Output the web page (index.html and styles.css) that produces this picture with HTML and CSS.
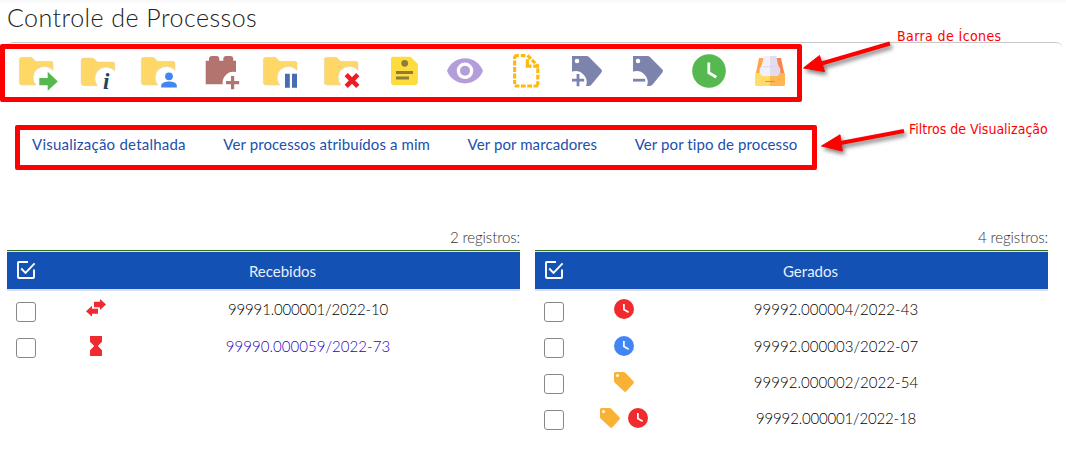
FILE: index.html
```html
<!DOCTYPE html>
<html lang="pt-BR">
<head>
<meta charset="utf-8">
<title>Controle de Processos</title>
<link rel="stylesheet" href="styles.css">
</head>
<body>
<svg class="defs" width="0" height="0" aria-hidden="true">
  <defs>
    <symbol id="folder" viewBox="0 0 40 40"><path d="M4 6.3H12.5Q13.6 6.3 14.4 7.1L17.5 10.3H33Q35 10.3 35 12.3V19.4A11 11 0 0 0 17.8 34H4Q1.3 34 1.3 31.3V9Q1.3 6.3 4 6.3Z" fill="#ffd766" stroke="#d9d3b4" stroke-width=".5"/></symbol>
    <symbol id="tag-cut" viewBox="0 0 40 40"><path fill-rule="evenodd" d="M5 5H19.5Q21 5 22.2 6.2L34.4 18.6Q35.6 20 34.4 21.4L24.6 33.4Q23.2 35 21.4 35H19A11.2 11.2 0 0 0 5 20.6ZM10 7.7A2.3 2.3 0 1 0 10 12.3A2.3 2.3 0 1 0 10 7.7Z" fill="#7c83ad"/></symbol>
    <symbol id="clock" viewBox="0 0 20 20"><circle cx="10" cy="10" r="10" fill="currentColor"/><path d="M9.9 5V10.6L14.6 13.3" fill="none" stroke="#fff" stroke-width="1.7"/></symbol>
    <symbol id="tag" viewBox="0 0 20 20"><path fill-rule="evenodd" d="M1.5 0H9.4Q10.5 0 11.3.8L19.4 9.2Q20.4 10.4 19.4 11.5L12.4 19.3Q11.2 20.5 10 19.3L.8 10.7Q0 10 0 8.8V1.5Q0 0 1.5 0ZM3.5 2A1.5 1.5 0 1 0 3.5 5A1.5 1.5 0 1 0 3.5 2Z" fill="#f9b233"/></symbol>
    <symbol id="check-all" viewBox="0 0 20 20"><path d="M12 2H2.8Q2 2 2 2.8V17.2Q2 18 2.8 18H17.2Q18 18 18 17.2V9.5M5.2 8.5L9.5 12.8L18.6 3.4" fill="none" stroke="#fff" stroke-width="1.9"/></symbol>
  </defs>
</svg>

<h1 class="title">Controle de Processos</h1>

<div class="command-bar">
  <div class="icon-frame">
    <svg class="icon" viewBox="0 0 40 40"><use href="#folder"/><path d="M21.3 27H29.7V20.8L39.8 30.4L29.7 39.8V34.3H21.3Z" fill="#56b94f"/></svg>
    <svg class="icon" viewBox="0 0 40 40"><use href="#folder" x=".8" y=".7"/><text x="24" y="38" class="info-glyph">i</text></svg>
    <svg class="icon" viewBox="0 0 40 40"><use href="#folder"/><circle cx="29" cy="25.3" r="3.9" fill="#4285f4"/><path d="M21.2 36.6V34.6C21.2 31.6 25.5 30.4 29 30.4S36.8 31.6 36.8 34.6V36.6Z" fill="#4285f4"/></svg>
    <svg class="icon" viewBox="0 0 40 40"><path d="M4.7 9.8H8V8Q8 5 11 5H15.3Q18.3 5 18.3 8V9.8H22.3V8Q22.3 5 25.3 5H29.3Q32.3 5 32.3 8V9.8H35V21A11 11 0 0 0 21.7 33.3H4.7Z" fill="#b3746f"/><path d="M31.6 25V38.2M25 31.7H38.2" stroke="#b3746f" stroke-width="3.2"/></svg>
    <svg class="icon" viewBox="0 0 40 40"><use href="#folder"/><path d="M23 22.8H27.8V36.8H23ZM30 22.8H35V36.8H30Z" fill="#466db3"/></svg>
    <svg class="icon" viewBox="0 0 40 40"><use href="#folder"/><path d="M23.2 23.7L34.8 35.3M34.8 23.7L23.2 35.3" stroke="#ed1c24" stroke-width="4.6"/></svg>
    <svg class="icon" viewBox="0 0 40 40"><path d="M9 5.8H26.5L33.9 13V31.6Q33.9 34 31.5 34H9.4Q7 34 7 31.6V7.8Q7 5.8 9 5.8Z" fill="#ffdc3e"/><g fill="#8e7d39"><circle cx="20.7" cy="12.3" r="3.4"/><path d="M12 20H29V22.9H12ZM12 25.6H25V28.5H12Z"/></g></svg>
    <svg class="icon" viewBox="0 0 40 40"><path fill-rule="evenodd" d="M20 7.2C11.8 7.2 4.8 12.3 2 19.8C4.8 27.3 11.8 32.4 20 32.4S35.2 27.3 38 19.8C35.2 12.3 28.2 7.2 20 7.2ZM20 11.5A8.3 8.3 0 1 1 20 28.1A8.3 8.3 0 1 1 20 11.5Z" fill="#b39ddb"/><circle cx="20" cy="19.8" r="5" fill="#b39ddb"/></svg>
    <svg class="icon" viewBox="0 0 40 40"><g fill="none" stroke="#ffb80f" stroke-width="3.2"><path d="M8.6 9.6V33" stroke-dasharray="4.8 1.7"/><path d="M8.6 8V7Q8.6 4.6 11 4.6H12.8"/><path d="M14.8 4.6H19.2"/><path d="M21.5 4.4L32.5 15.6" stroke-dasharray="4.8 1.4"/><path d="M21.4 8.2V15.2H25.5M27.2 15.2H33"/><path d="M31.8 17.2V34" stroke-dasharray="4.9 1.6"/><path d="M8.6 35H33" stroke-dasharray="4.8 1.5"/></g></svg>
    <svg class="icon" viewBox="0 0 40 40"><use href="#tag-cut"/><path d="M11 23V35.2M5 29.1H17.2" stroke="#7c83ad" stroke-width="2.8"/></svg>
    <svg class="icon" viewBox="0 0 40 40"><use href="#tag-cut"/><path d="M5 29.2H17.2" stroke="#7c83ad" stroke-width="2.8"/></svg>
    <svg class="icon" viewBox="0 0 40 40"><circle cx="20" cy="20" r="16.8" fill="#56b94f"/><path d="M19.8 11.5V21.6L27.3 26.2" fill="none" stroke="#fff" stroke-width="2.8"/></svg>
    <svg class="icon" viewBox="0 0 40 40"><path d="M9 7H14L9 25H5.3Z" fill="#ffa64d"/><path d="M26 7H31L34.8 25H28Z" fill="#fb824a"/><path d="M14 5H20V26H9.6V18L11.7 14.6Z" fill="#f4f0fb"/><path d="M20 5H26.3L28 13.8L30.3 18V26H20Z" fill="#e3dcf1"/><path d="M12.3 15.8H27.8" stroke="#ddd5ed" stroke-width="1"/><path d="M5 22H9Q11 22 12 25H20V35H6.4Q5 35 5 33.6Z" fill="#ffdc6b"/><path d="M20 25H28Q29 22 31 22H35V33.6Q35 35 33.6 35H20Z" fill="#ffb750"/><path d="M15.2 30.5H24.8" stroke="#fb824a" stroke-width="1.1"/></svg>
  </div>
</div>

<nav class="filters">
  <a class="wide">Visualização detalhada</a>
  <a>Ver processos atribuídos a mim</a>
  <a>Ver por marcadores</a>
  <a>Ver por tipo de processo</a>
</nav>

<main class="tables">
  <section class="table">
    <p class="count">2 registros:</p>
    <header class="head"><svg class="mini" viewBox="0 0 20 20"><use href="#check-all"/></svg><h2 class="h">Recebidos</h2></header>
    <div class="row"><i class="box"></i><div class="marks"><svg class="mini" viewBox="0 0 20 20"><path d="M8 2.8H14V0L20 5.5L14 11V8.2H8ZM12 9.8V14.8H6V17.8L0 12.2L6 6.8V9.8Z" fill="#ef2b2f"/></svg></div><span class="num tight">99991.000001/2022-10</span></div>
    <div class="row"><i class="box"></i><div class="marks"><svg class="mini" viewBox="0 0 20 20"><path d="M4 0H16V5.8L11.8 10L16 14.2V20H4V14.2L8.2 10L4 5.8Z" fill="#ef2b2f"/></svg></div><span class="num visited">99990.000059/2022-73</span></div>
  </section>
  <section class="table">
    <p class="count">4 registros:</p>
    <header class="head"><svg class="mini" viewBox="0 0 20 20"><use href="#check-all"/></svg><h2 class="h">Gerados</h2></header>
    <div class="row"><i class="box"></i><div class="marks"><svg class="mini red" viewBox="0 0 20 20"><use href="#clock"/></svg></div><span class="num">99992.000004/2022-43</span></div>
    <div class="row"><i class="box"></i><div class="marks"><svg class="mini blue" viewBox="0 0 20 20"><use href="#clock"/></svg></div><span class="num">99992.000003/2022-07</span></div>
    <div class="row"><i class="box"></i><div class="marks"><svg class="mini" viewBox="0 0 20 20"><use href="#tag"/></svg></div><span class="num">99992.000002/2022-54</span></div>
    <div class="row"><i class="box"></i><div class="marks"><svg class="mini" viewBox="0 0 20 20"><use href="#tag"/></svg><svg class="mini red" viewBox="0 0 20 20"><use href="#clock"/></svg></div><span class="num tight">99992.000001/2022-18</span></div>
  </section>
</main>

<svg class="arrows" width="1066" height="190" viewBox="0 0 1066 190" aria-hidden="true">
  <g fill="#f00" stroke="#f00" stroke-linejoin="round">
    <path d="M803.5 68L819.5 55.5L824.5 71.5Z"/><path d="M820 64L890 43.5" stroke-width="4"/>
    <path d="M821.5 146L840 134.8L842.3 151Z"/><path d="M838 143.5L904 131" stroke-width="4"/>
  </g>
</svg>
<span class="note note-icons">Barra de Ícones</span>
<span class="note note-filters">Filtros de Visualização</span>
</body>
</html>
```
FILE: styles.css
```css
* { box-sizing: border-box; }
body {
  margin: 0;
  width: 1066px;
  height: 470px;
  overflow: hidden;
  position: relative;
  background: linear-gradient(#f8f8f8, #fff 4px) no-repeat;
  color: #222;
  font-family: Lato, "Open Sans", sans-serif;
}
.defs { position: absolute; }
.title {
  margin: 0;
  height: 42px;
  padding: 2px 0 0 7px;
  font-size: 25px;
  line-height: 30px;
  font-weight: 300;
  letter-spacing: .46px;
}
.command-bar {
  width: 1055px;
  height: 83px;
  margin-left: 7px;
  border-top: 1px solid #c8c8c8;
  border-radius: 6px;
}
.icon-frame {
  width: 802px;
  height: 58px;
  margin: 1px 0 0 -7px;
  padding-left: 13px;
  border: 5px solid #f00;
  border-radius: 2px;
  display: flex;
  align-items: flex-start;
  gap: 21px;
}
.icon { width: 40px; height: 40px; flex: none; margin-top: 2px; overflow: visible; }
.info-glyph { font: italic bold 23px/1 "Liberation Serif", serif; fill: #1c4660; }
.filters {
  width: 802px;
  height: 45px;
  margin-left: 15px;
  padding: 5px 0 0 12px;
  border: 5px solid #f00;
  border-radius: 2px;
  display: flex;
  gap: 37.5px;
  font-size: 15px;
  line-height: 19px;
  letter-spacing: .1px;
  color: #1c4fae;
  white-space: nowrap;
}
.wide { letter-spacing: .23px; }
.tables { display: flex; gap: 15px; padding: 58px 0 0 7px; }
.table { width: 513px; }
.count {
  margin: 0;
  height: 22px;
  line-height: 19px;
  font-size: 15px;
  font-weight: 300;
  letter-spacing: -.1px;
  text-align: right;
  color: #333;
}
.head {
  height: 41px;
  display: grid;
  grid-template-columns: 38px 475px;
  align-items: center;
  justify-items: center;
  background: #1351b4;
  border-top: 1px solid #3d6b1c;
  border-bottom: 2px solid #dee2e6;
  margin-bottom: 3px;
  box-shadow: inset 0 1px #dfe4cf;
}
.h { margin: 2px 0 0; font-size: 15px; line-height: 18px; font-weight: 400; color: #e8eefa; }
.mini { width: 20px; height: 20px; display: block; }
.row {
  height: 36px;
  display: grid;
  grid-template-columns: 38px 102px 322px;
  align-items: center;
  justify-items: center;
}
.box { width: 20px; height: 20px; border: 1px solid #888; border-radius: 3px; }
.marks { display: flex; gap: 8px; margin-top: -4px; }
.head + .row .marks { margin-top: -6px; }
.num { font-size: 15px; line-height: 20px; font-weight: 300; letter-spacing: .04px; margin-top: -5px; color: #000; }
.head + .row .num { margin-top: -7px; }
.tight { letter-spacing: -.18px; }
.visited { color: #2a00c0; }
.red { color: #ef2b2f; }
.blue { color: #4285f4; }
.arrows { position: absolute; left: 0; top: 0; filter: drop-shadow(2px 3px 2px rgba(0, 0, 0, .5)); }
.note { position: absolute; color: #f00; font: 14px/18px "DejaVu Sans Condensed", "DejaVu Sans", sans-serif; white-space: nowrap; }
.note-icons { left: 897px; top: 27px; letter-spacing: .4px; }
.note-filters { left: 909px; top: 120px; }
```
